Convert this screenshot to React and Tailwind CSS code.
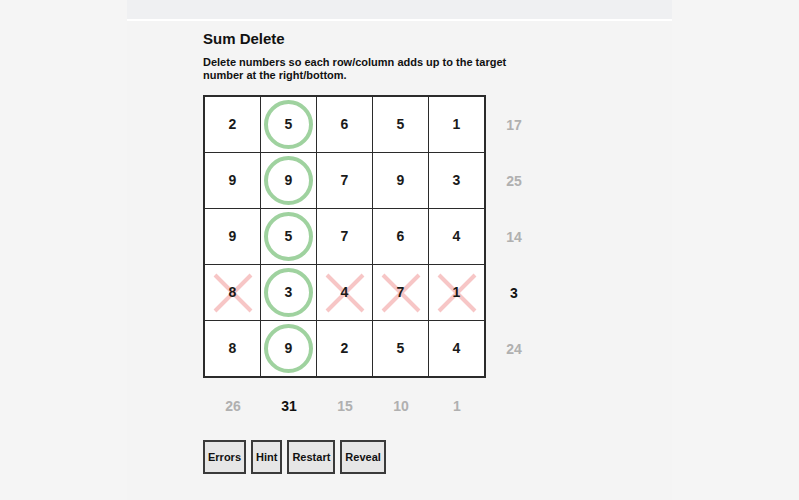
import React from 'react';

const grid = [
  [2, 5, 6, 5, 1],
  [9, 9, 7, 9, 3],
  [9, 5, 7, 6, 4],
  [8, 3, 4, 7, 1],
  [8, 9, 2, 5, 4],
];

// 'o' = kept (circled), 'x' = deleted
const marks = [
  ['', 'o', '', '', ''],
  ['', 'o', '', '', ''],
  ['', 'o', '', '', ''],
  ['x', 'o', 'x', 'x', 'x'],
  ['', 'o', '', '', ''],
];

const rowTargets = [
  { n: 17, done: false },
  { n: 25, done: false },
  { n: 14, done: false },
  { n: 3, done: true },
  { n: 24, done: false },
];

const colTargets = [
  { n: 26, done: false },
  { n: 31, done: true },
  { n: 15, done: false },
  { n: 10, done: false },
  { n: 1, done: false },
];

function Cell({ value, mark }) {
  return (
    <div className="relative bg-white w-[55px] h-[55px] flex items-center justify-center">
      {mark === 'o' && (
        <div className="absolute w-[49px] h-[49px] rounded-full border-[4px] border-[#9fd29f]" />
      )}
      {mark === 'x' && (
        <svg className="absolute" width="40" height="40" viewBox="0 0 40 40">
          <path d="M2 2 L38 38 M38 2 L2 38" stroke="#f7c6c6" strokeWidth="4" />
        </svg>
      )}
      <span className="relative text-[14px] font-bold text-[#1a1a1a]">{value}</span>
    </div>
  );
}

export default function App() {
  return (
    <div className="min-h-[500px] bg-[#f5f5f5] flex justify-center font-['Liberation_Sans',Arial,sans-serif]">
      <div className="w-[545px] bg-[#f4f4f4] flex flex-col">
        <div className="h-[19px] bg-[#eff0f2]" />
        <div className="h-[2px] bg-white" />

        <div className="pl-[76px] pt-[9px]">
          <h1 className="text-[15px] font-bold text-[#111] leading-[18px]">Sum Delete</h1>
          <p className="mt-[8px] w-[320px] text-[11px] font-bold text-[#111] leading-[13px]">
            Delete numbers so each row/column adds up to the target number at the right/bottom.
          </p>

          <div className="mt-[13px] flex">
            <div className="grid grid-cols-[repeat(5,55px)] gap-px bg-[#2b2b2b] p-[2px]">
              {grid.map((row, r) =>
                row.map((v, c) => <Cell key={`${r}-${c}`} value={v} mark={marks[r][c]} />)
              )}
            </div>
            <div className="flex flex-col pt-[2px]">
              {rowTargets.map((t, i) => (
                <div
                  key={i}
                  className={`w-[56px] h-[56px] flex items-center justify-center text-[14px] font-bold ${
                    t.done ? 'text-[#111]' : 'text-[#b0b0b0]'
                  }`}
                >
                  {t.n}
                </div>
              ))}
            </div>
          </div>

          <div className="flex pl-[2px]">
            {colTargets.map((t, i) => (
              <div
                key={i}
                className={`w-[56px] h-[57px] flex items-center justify-center text-[14px] font-bold ${
                  t.done ? 'text-[#111]' : 'text-[#b0b0b0]'
                }`}
              >
                {t.n}
              </div>
            ))}
          </div>

          <div className="mt-[5px] flex gap-[5px]">
            {['Errors', 'Hint', 'Restart', 'Reveal'].map((b) => (
              <button
                key={b}
                className="h-[34px] px-[3px] bg-[#e6e6e6] border-2 border-[#3a3a3a] text-[11px] font-bold text-[#111]"
              >
                {b}
              </button>
            ))}
          </div>
        </div>
      </div>
    </div>
  );
}
